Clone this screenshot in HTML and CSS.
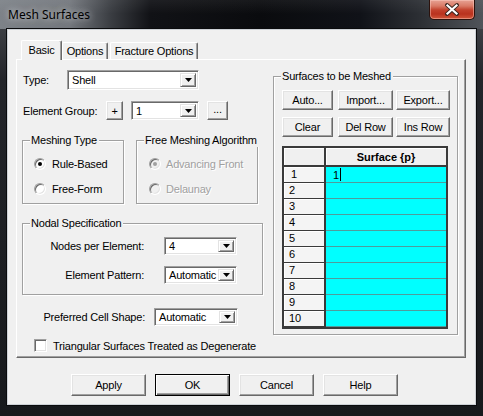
FILE: index.html
```html
<!DOCTYPE html>
<html>
<head>
<meta charset="utf-8">
<link rel="stylesheet" href="styles.css">
</head>
<body>
<div class="window">
  <div class="titlebar">
    <span class="title">Mesh Surfaces</span>
    <div class="close">
      <svg width="44" height="19" viewBox="0 0 44 19">
        <path d="M17 5 L27 14 M27 5 L17 14" stroke="#3a2620" stroke-width="4" stroke-linecap="round"/>
        <path d="M17.5 5.5 L26.5 13.5 M26.5 5.5 L17.5 13.5" stroke="#ffffff" stroke-width="2.2" stroke-linecap="square"/>
      </svg>
    </div>
  </div>
  <div class="client">
    <div class="tabs">
      <div class="tab active t-basic">Basic</div>
      <div class="tab t-options">Options</div>
      <div class="tab t-fracture">Fracture Options</div>
    </div>
    <div class="panel">
      <div class="left">
        <div class="row type-row">
          <span class="lbl w-type">Type:</span>
          <div class="combo c-type"><span class="val">Shell</span><span class="arrow"><svg width="7" height="4" viewBox="0 0 7 4"><polygon points="0,0 7,0 3.5,4" fill="#000"/></svg></span></div>
        </div>
        <div class="row eg-row">
          <span class="lbl w-eg">Element Group:</span>
          <div class="btn b-plus">+</div>
          <div class="combo c-eg"><span class="val">1</span><span class="arrow"><svg width="7" height="4" viewBox="0 0 7 4"><polygon points="0,0 7,0 3.5,4" fill="#000"/></svg></span></div>
          <div class="btn b-dots">...</div>
        </div>
        <div class="algo-row">
          <div class="group g-mesh">
            <div class="gtitle">Meshing Type</div>
            <div class="ropt first"><span class="radio checked"></span><span>Rule-Based</span></div>
            <div class="ropt"><span class="radio"></span><span>Free-Form</span></div>
          </div>
          <div class="group g-free">
            <div class="gtitle">Free Meshing Algorithm</div>
            <div class="ropt first disabled"><span class="radio checked"></span><span>Advancing Front</span></div>
            <div class="ropt disabled"><span class="radio"></span><span>Delaunay</span></div>
          </div>
        </div>
        <div class="group g-nodal">
          <div class="gtitle">Nodal Specification</div>
          <div class="nrow first">
            <span class="nlbl">Nodes per Element:</span>
            <div class="combo c-small"><span class="val">4</span><span class="arrow"><svg width="7" height="4" viewBox="0 0 7 4"><polygon points="0,0 7,0 3.5,4" fill="#000"/></svg></span></div>
          </div>
          <div class="nrow">
            <span class="nlbl">Element Pattern:</span>
            <div class="combo c-small"><span class="val">Automatic</span><span class="arrow"><svg width="7" height="4" viewBox="0 0 7 4"><polygon points="0,0 7,0 3.5,4" fill="#000"/></svg></span></div>
          </div>
        </div>
        <div class="row pref-row">
          <span class="plbl">Preferred Cell Shape:</span>
          <div class="combo c-pref"><span class="val">Automatic</span><span class="arrow"><svg width="7" height="4" viewBox="0 0 7 4"><polygon points="0,0 7,0 3.5,4" fill="#000"/></svg></span></div>
        </div>
        <div class="row chk-row">
          <span class="check"></span><span>Triangular Surfaces Treated as Degenerate</span>
        </div>
      </div>
      <div class="group g-surf">
        <div class="gtitle">Surfaces to be Meshed</div>
        <div class="brow first">
          <div class="btn b-auto">Auto...</div>
          <div class="btn b-imp">Import...</div>
          <div class="btn b-exp">Export...</div>
        </div>
        <div class="brow">
          <div class="btn b-auto">Clear</div>
          <div class="btn b-imp">Del Row</div>
          <div class="btn b-exp">Ins Row</div>
        </div>
        <div class="grid">
          <div class="corner"></div>
          <div class="head">Surface {p}</div>
          <div class="rh r1">1</div><div class="cell"><span>1</span><span class="caret"></span></div>
          <div class="rh">2</div><div class="cell"></div>
          <div class="rh">3</div><div class="cell"></div>
          <div class="rh">4</div><div class="cell"></div>
          <div class="rh">5</div><div class="cell"></div>
          <div class="rh">6</div><div class="cell"></div>
          <div class="rh">7</div><div class="cell"></div>
          <div class="rh">8</div><div class="cell"></div>
          <div class="rh">9</div><div class="cell"></div>
          <div class="rh">10</div><div class="cell"></div>
        </div>
      </div>
    </div>
    <div class="buttons">
      <div class="btn big">Apply</div>
      <div class="btn big default">OK</div>
      <div class="btn big">Cancel</div>
      <div class="btn big">Help</div>
    </div>
  </div>
</div>
</body>
</html>
```
FILE: styles.css
```css
* { box-sizing: border-box; }
html, body { margin: 0; padding: 0; }
body {
  width: 483px;
  height: 416px;
  overflow: hidden;
  background: #15171a;
  font-family: "Liberation Sans", Arial, sans-serif;
  font-size: 11px;
  letter-spacing: -0.2px;
  white-space: nowrap;
  color: #000;
}
.window {
  width: 483px;
  height: 416px;
  display: flex;
  flex-direction: column;
  background: linear-gradient(180deg, #4a4d52 0px, #23252a 80px, #17191c 100%);
}
.titlebar {
  height: 29px;
  flex: none;
  display: flex;
  justify-content: space-between;
  align-items: flex-start;
  padding: 0 8px 0 8px;
  background:
    linear-gradient(180deg, rgba(255,255,255,0.06) 0, rgba(0,0,0,0) 14px),
    linear-gradient(90deg, #7d8288 0px, #73777d 70px, #3b3e43 110px, #111216 150px, #0a0b0e 260px, #101218 360px, #2c2f34 420px, #50545a 483px);
}
.title {
  font-family: "Noto Sans", "Open Sans", sans-serif;
  font-size: 12px;
  letter-spacing: 0;
  line-height: 16px;
  margin-top: 7px;
  color: #000;
  text-shadow: 0 0 6px rgba(255,255,255,0.55), 0 0 10px rgba(255,255,255,0.35);
}
.close {
  width: 46px;
  height: 20px;
  border: 1px solid #2b120d;
  border-top: none;
  border-radius: 0 0 5px 5px;
  background: linear-gradient(180deg, #e7a294 0px, #d97a66 6px, #c2412c 10px, #b9321e 14px, #d1573b 19px);
  box-shadow: inset 0 0 0 1px rgba(255,210,200,0.45);
  display: flex;
  align-items: flex-start;
  justify-content: center;
}
.client {
  margin: 0 7px;
  height: 376px;
  flex: none;
  background: #f0f0f0;
  border: 1px solid #cdd1d6;
  box-shadow: 0 0 0 1px #0a0b0d;
  display: flex;
  flex-direction: column;
}
.tabs {
  margin-top: 10px;
  padding-left: 13px;
  height: 19px;
  display: flex;
  align-items: flex-end;
  position: relative;
  z-index: 1;
}
.tab {
  height: 17px;
  background: #f0f0f0;
  border-top: 1px solid #fff;
  border-left: 1px solid #fff;
  border-right: 1px solid #696969;
  box-shadow: inset -1px 0 0 #a0a0a0;
  border-radius: 2px 2px 0 0;
  display: flex;
  align-items: center;
  justify-content: center;
  padding-bottom: 1px;
}
.tab.active {
  height: 20px;
  margin-bottom: -1px;
  padding-bottom: 2px;
}
.t-basic { width: 41px; }
.t-options { width: 46px; }
.t-fracture { width: 88px; margin-left: 2px; }
.panel {
  margin-left: 8px;
  width: 450px;
  height: 299px;
  flex: none;
  border: 1px solid;
  border-color: #fff #696969 #696969 #fff;
  box-shadow: inset -1px -1px 0 #a0a0a0;
  display: flex;
  align-items: flex-start;
  padding: 10px 0 0 6px;
}
.left {
  width: 240px;
  flex: none;
  display: flex;
  flex-direction: column;
}
.row {
  display: flex;
  align-items: center;
}
.type-row { height: 20px; }
.w-type { width: 44px; }
.c-type { width: 132px; height: 20px; }
.eg-row { height: 19px; margin-top: 11px; }
.w-eg { width: 83px; }
.b-plus { width: 17px; height: 19px; }
.c-eg { width: 68px; height: 19px; margin-left: 8px; }
.b-dots { width: 21px; height: 19px; margin-left: 8px; padding-bottom: 3px; }

.combo {
  display: flex;
  align-items: stretch;
  background: #fff;
  border: 1px solid;
  border-color: #a0a0a0 #fff #fff #a0a0a0;
  box-shadow: inset 1px 1px 0 #696969, inset -1px -1px 0 #e3e3e3;
  padding: 2px;
}
.combo .val {
  flex: 1;
  padding-left: 2px;
  display: flex;
  align-items: center;
  overflow: hidden;
}
.combo .arrow {
  width: 16px;
  flex: none;
  background: #f0f0f0;
  border: 1px solid;
  border-color: #e3e3e3 #696969 #696969 #e3e3e3;
  box-shadow: inset 1px 1px 0 #fff, inset -1px -1px 0 #a0a0a0;
  display: flex;
  align-items: center;
  justify-content: center;
}
.btn {
  background: #f0f0f0;
  border: 1px solid;
  border-color: #fff #696969 #696969 #fff;
  box-shadow: inset -1px -1px 0 #a0a0a0, inset 1px 1px 0 #e3e3e3;
  display: flex;
  align-items: center;
  justify-content: center;
}
.btn.default {
  border-color: #000;
  box-shadow: inset 1px 1px 0 #fff, inset -1px -1px 0 #696969, inset -2px -2px 0 #a0a0a0;
}

.group {
  border: 1px solid #a0a0a0;
  box-shadow: inset 1px 1px 0 #fff, 1px 1px 0 #fff;
  flex: none;
}
.gtitle {
  display: table;
  margin: -7px 0 0 7px;
  padding: 0 2px 0 1px;
  background: #f0f0f0;
  line-height: 13px;
}
.algo-row {
  display: flex;
  margin-top: 20px;
}
.g-mesh { width: 102px; height: 64px; margin-left: -1px; }
.g-free { width: 122px; height: 64px; margin-left: 12px; }
.ropt {
  display: flex;
  align-items: center;
  height: 13px;
  margin-top: 12px;
  padding-left: 11px;
}
.ropt.first { margin-top: 10px; }
.g-free .ropt { padding-left: 12px; }
.radio {
  width: 12px;
  height: 12px;
  flex: none;
  margin-right: 6px;
  border-radius: 50%;
  background: #fff;
  border: 1px solid;
  border-color: #a0a0a0 #fff #fff #a0a0a0;
  box-shadow: inset 1px 1px 0 #696969, inset -1px -1px 0 #e3e3e3;
  display: flex;
  align-items: center;
  justify-content: center;
}
.radio.checked::after {
  content: "";
  width: 4px;
  height: 4px;
  border-radius: 50%;
  background: #000;
}
.disabled { color: #a0a0a0; text-shadow: 1px 1px 0 #fff; }
.disabled .radio { background: #f0f0f0; }
.disabled .radio.checked::after { background: #a0a0a0; }
.g-free .radio { margin-right: 5px; }

.g-nodal { width: 241px; height: 72px; margin-left: -1px; margin-top: 19px; }
.nrow {
  display: flex;
  align-items: center;
  margin-top: 11px;
}
.nrow.first { margin-top: 7px; }
.nlbl { width: 121px; text-align: right; }
.c-small { width: 73px; height: 18px; margin-left: 20px; }

.pref-row { margin-top: 13px; height: 18px; }
.plbl { width: 122px; text-align: right; }
.c-pref { width: 84px; height: 18px; margin-left: 9px; }

.chk-row { margin-top: 13px; padding-left: 11px; height: 13px; }
.check {
  width: 13px;
  height: 13px;
  flex: none;
  margin-right: 6px;
  background: #fff;
  border: 1px solid;
  border-color: #a0a0a0 #fff #fff #a0a0a0;
  box-shadow: inset 1px 1px 0 #696969, inset -1px -1px 0 #e3e3e3;
}

.g-surf {
  width: 185px;
  height: 259px;
  margin-left: 10px;
  margin-top: 6px;
}
.brow {
  display: flex;
  height: 20px;
  margin-top: 7px;
  padding-left: 8px;
}
.b-auto { width: 51px; }
.b-imp { width: 55px; margin-left: 5px; }
.b-exp { width: 54px; margin-left: 3px; }

.grid {
  margin: 9px 0 0 8px;
  width: 166px;
  height: 183px;
  display: grid;
  grid-template-columns: 42px 1fr;
  grid-template-rows: 19px repeat(10, 16px);
  border: 2px solid #3a3a3a;
  background: #00ffff;
}
.corner {
  background: #f0f0f0;
  border-right: 2px solid #3a3a3a;
  border-bottom: 2px solid #3a3a3a;
  box-shadow: inset 1px 1px 0 #fff;
}
.head {
  background: #f0f0f0;
  border-bottom: 2px solid #3a3a3a;
  box-shadow: inset 1px 1px 0 #fff;
  font-weight: bold;
  letter-spacing: 0;
  display: flex;
  align-items: center;
  justify-content: center;
}
.rh {
  background: #f4f4f4;
  border-right: 2px solid #3a3a3a;
  border-bottom: 1px solid #3a3a3a;
  box-shadow: inset 1px 1px 0 #fff;
  padding-left: 5px;
  display: flex;
  align-items: center;
  line-height: 13px;
}
.rh.r1 { padding-left: 7px; }
.cell {
  background: #00ffff;
  border-bottom: 1px solid #4f9c9c;
  display: flex;
  align-items: center;
  padding-left: 7px;
}
.caret {
  width: 1px;
  height: 13px;
  background: #000;
  margin-left: 1px;
}

.buttons {
  display: flex;
  margin-top: 16px;
  padding-left: 63px;
}
.btn.big { width: 75px; height: 22px; margin-right: 9px; }
```
